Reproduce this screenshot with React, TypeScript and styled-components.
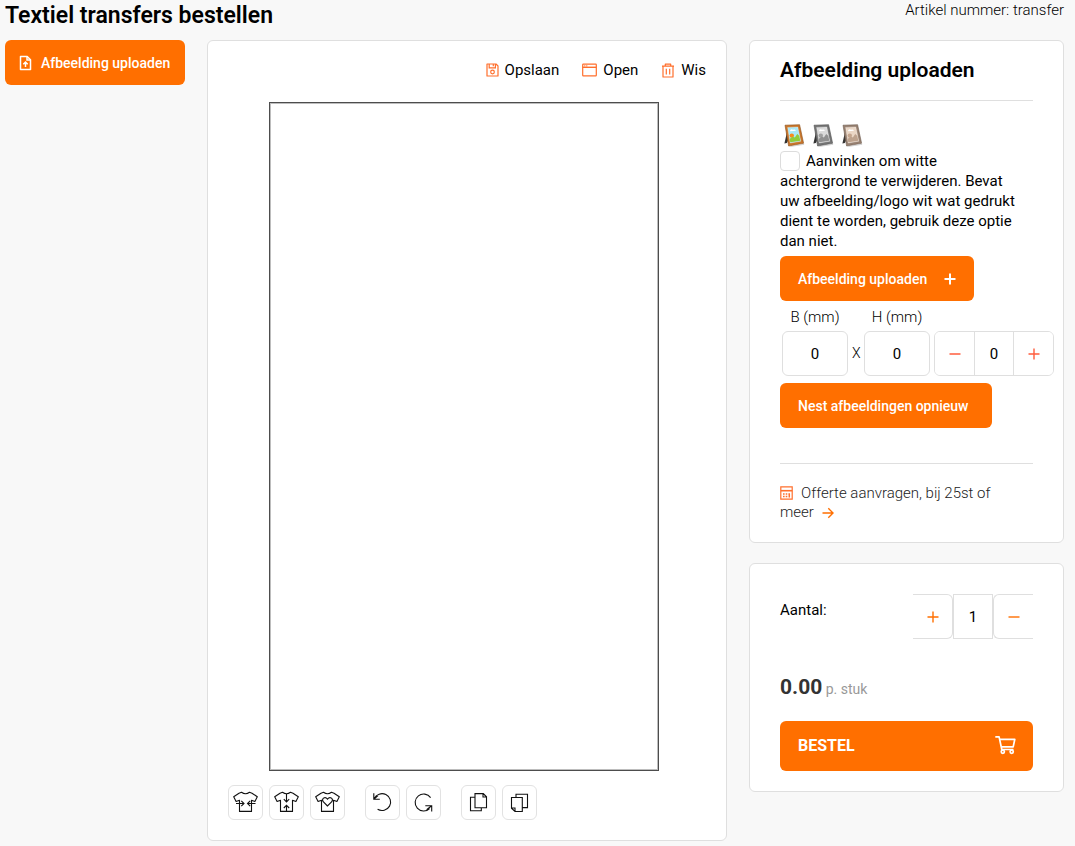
import React from 'react';
import styled, { createGlobalStyle, css } from 'styled-components';

const GlobalStyle = createGlobalStyle`
  *, *::before, *::after { box-sizing: border-box; }
  body {
    margin: 0;
    background: #f8f8f8;
    color: #000;
    font-family: Roboto, "Liberation Sans", sans-serif;
    font-size: 15px;
    line-height: 20px;
  }
  button, input { font: inherit; color: inherit; }
  svg { display: block; flex: none; }
`;

const Page = styled.div`
  padding: 0 11px 5px 5px;
`;

const Header = styled.header`
  display: flex;
  justify-content: space-between;
  align-items: flex-start;
  height: 40px;
`;

const PageTitle = styled.h1`
  margin: 0;
  font-size: 23px;
  line-height: 31px;
  font-weight: 600;
`;

const ArticleNumber = styled.span`
  font-weight: 300;
`;

const Columns = styled.main`
  display: grid;
  grid-template-columns: 180px minmax(0, 1fr) 315px;
  gap: 22px;
  align-items: start;
`;

const Card = styled.section`
  background: #fff;
  border: 1px solid #dfdfdf;
  border-radius: 6px;
`;

const Sidebar = styled.aside`
  display: flex;
  flex-direction: column;
  gap: 20px;
`;

const OrangeButton = styled.button<{ $compact?: boolean }>`
  display: inline-flex;
  align-items: center;
  gap: ${p => (p.$compact ? 9 : 17)}px;
  height: 45px;
  padding: 0 ${p => (p.$compact ? 11 : 18)}px;
  ${p => p.$compact && css`padding-left: 14px; width: 100%;`}
  border: 0;
  border-radius: 6px;
  background: #ff6f00;
  color: #fff;
  font-size: 14px;
  font-weight: 500;
  white-space: nowrap;
  cursor: pointer;
`;

const NestButton = styled(OrangeButton)`
  min-width: 212px;
`;

const Editor = styled(Card)`
  padding: 19px 20px 20px;
`;

const FileActions = styled.div`
  display: flex;
  justify-content: flex-end;
  gap: 23px;
`;

const FileAction = styled.button`
  display: flex;
  align-items: center;
  gap: 6px;
  padding: 0;
  border: 0;
  background: none;
  cursor: pointer;
`;

const CanvasArea = styled.div`
  display: flex;
  justify-content: center;
  margin: 22px 0 14px;
  padding-right: 6px;
`;

const PrintSheet = styled.div`
  width: 390px;
  height: 669px;
  background: #fff;
  border: 1px solid #4d4d4d;
  box-shadow: inset 0 0 0 1px #bdbdbd;
`;

const ToolRow = styled.div`
  display: flex;
  gap: 20px;
`;

const ToolGroup = styled.div`
  display: flex;
  gap: 6px;
`;

const ToolButton = styled.button`
  display: grid;
  place-items: center;
  width: 35px;
  height: 35px;
  padding: 0;
  border: 1px solid #e2e2e2;
  border-radius: 6px;
  background: #fff;
  cursor: pointer;
`;

const UploadCard = styled(Card)`
  padding: 14px 30px 20px;
`;

const CardTitle = styled.h2`
  margin: 0;
  padding-bottom: 15px;
  border-bottom: 1px solid #dfdfdf;
  font-size: 21px;
  line-height: 30px;
  font-weight: 600;
`;

const Filters = styled.div`
  display: flex;
  gap: 7px;
  padding: 23px 0 4px 3px;
`;

const FilterButton = styled.button`
  padding: 0;
  border: 0;
  background: none;
  cursor: pointer;
`;

const CheckLabel = styled.label`
  display: block;
  margin-bottom: 5px;
`;

const Checkbox = styled.input`
  appearance: none;
  width: 20px;
  height: 20px;
  margin: 0 6px 0 0;
  border: 1px solid #dcdcdc;
  border-radius: 4px;
  background: #fff;
  vertical-align: top;
`;

const SizeRow = styled.div`
  display: flex;
  align-items: flex-end;
  gap: 4px;
  margin: 6px 0 7px;
  padding-left: 2px;
`;

const SizeField = styled.label`
  flex: none;
  width: 66px;
  text-align: center;
  font-weight: 300;
`;

const Times = styled.span`
  flex: none;
  width: 8px;
  font-size: 14px;
  line-height: 45px;
  font-weight: 300;
  text-align: center;
`;

const SizeInput = styled.input`
  display: block;
  width: 100%;
  height: 45px;
  margin-top: 4px;
  padding: 0;
  border: 1px solid #dfdfdf;
  border-radius: 6px;
  background: #fff;
  text-align: center;
  font-weight: 400;
`;

const Stepper = styled.div`
  display: flex;
  flex: none;
  width: 120px;
  height: 45px;
  border: 1px solid #dfdfdf;
  border-radius: 6px;
  overflow: hidden;
`;

const StepButton = styled.button`
  display: grid;
  place-items: center;
  flex: 1 1 0;
  padding: 0;
  border: 0;
  background: #fff;
  color: #ff5c3d;
  cursor: pointer;
`;

const StepInput = styled.input`
  flex: none;
  width: 40px;
  padding: 0;
  border: solid #dfdfdf;
  border-width: 0 1px;
  background: #fff;
  text-align: center;
`;

const QuoteBlock = styled.div`
  margin-top: 35px;
  padding-top: 20px;
  border-top: 1px solid #dfdfdf;
  line-height: 19px;
`;

const QuoteLink = styled.a`
  color: #222;
  font-weight: 300;
  text-decoration: none;
  svg { display: inline-block; vertical-align: -2px; }
`;

const LeadIcon = styled.span`
  margin-right: 8px;
`;

const LastWord = styled.span`
  white-space: nowrap;
  svg { margin-left: 8px; }
`;

const OrderCard = styled(Card)`
  padding: 30px 30px 20px;
`;

const AmountRow = styled.div`
  display: flex;
  justify-content: space-between;
  align-items: flex-start;
`;

const AmountLabel = styled.label`
  padding-top: 6px;
`;

const AmountStepper = styled.div`
  display: flex;
  height: 45px;
`;

const AmountButton = styled.button<{ $side: 'left' | 'right' }>`
  display: grid;
  place-items: center;
  width: 40px;
  padding: 0;
  border: 1px solid #dfdfdf;
  ${p => p.$side === 'left'
    ? css`border-left: 0; border-radius: 0 6px 6px 0;`
    : css`border-right: 0; border-radius: 6px 0 0 6px;`}
  background: #fff;
  color: #ff6f00;
  cursor: pointer;
`;

const AmountInput = styled.input`
  width: 40px;
  padding: 0;
  border: 1px solid #dfdfdf;
  background: #fff;
  text-align: center;
`;

const Price = styled.p`
  margin: 33px 0 17px;
  line-height: 30px;
  font-size: 14px;
  color: #999;
`;

const PriceValue = styled.strong`
  font-size: 21px;
  font-weight: 700;
  color: #333;
`;

const OrderButton = styled(OrangeButton)`
  justify-content: space-between;
  width: 100%;
  height: 50px;
  padding-right: 17px;
  font-size: 16px;
  font-weight: 700;
`;

const UploadIcon = () => (
  <svg width="13" height="16" viewBox="0 0 13 16" fill="none" stroke="#fff" strokeWidth="1.5">
    <path d="M1.5 1.5h6.7l3.3 3.3v9.7h-10z" strokeLinejoin="round" />
    <path d="M8 1.5v3.5h3.5M6.5 12V7.5M4.3 9.3l2.2-2.2 2.2 2.2" />
  </svg>
);

const SaveIcon = () => (
  <svg width="13" height="14" viewBox="0 0 13 14" fill="none" stroke="#ff6f2c" strokeWidth="1.2">
    <path d="M1 1h9l2 2v10H1z" strokeLinejoin="round" />
    <path d="M3.2 1v3.8h6.2V1M7.3 1v2.2" />
    <circle cx="6.5" cy="9" r="1.8" />
  </svg>
);

const WindowIcon = () => (
  <svg width="15" height="14" viewBox="0 0 15 14" fill="none" stroke="#ff6f2c" strokeWidth="1.2">
    <rect x=".7" y="1.2" width="13.6" height="11.6" rx=".6" />
    <path d="M.7 4.3h13.6" strokeWidth="1.4" />
    <path d="M2.3 2.8h1M4.3 2.8h1" />
  </svg>
);

const TrashIcon = () => (
  <svg width="14" height="15" viewBox="0 0 14 15" fill="none" stroke="#ff6f2c" strokeWidth="1.2">
    <path d="M1 3.2h12M4.3 3V1.2h5.4V3M2 3.2V14h10V3.2M5.3 5.8v5.8M8.7 5.8v5.8" strokeLinejoin="round" />
  </svg>
);

const CalculatorIcon = () => (
  <svg width="13" height="14" viewBox="0 0 13 14" fill="none" stroke="#ff6f2c" strokeWidth="1.2">
    <path d="M.8.8h11.4v12.4H.8z" />
    <path d="M.8 4.7h11.4" strokeWidth="1.6" />
    <path d="M3 8h1.6M5.7 8h1.6M8.4 8H10M3 10.6h1.6M5.7 10.6h1.6M9.3 8v3.4" strokeWidth="1.5" />
  </svg>
);

const ArrowIcon = () => (
  <svg width="12" height="12" viewBox="0 0 12 12" fill="none" stroke="#ff6f00" strokeWidth="1.4">
    <path d="M.5 6h10.3M6.3 1.3 11 6l-4.7 4.7" />
  </svg>
);

const PlusIcon = ({ weight = 1.4 }: { weight?: number }) => (
  <svg width="12" height="12" viewBox="0 0 12 12" stroke="currentColor" strokeWidth={weight}>
    <path d="M.5 6h11M6 .5v11" />
  </svg>
);

const MinusIcon = () => (
  <svg width="12" height="12" viewBox="0 0 12 12" stroke="currentColor" strokeWidth="1.4">
    <path d="M.5 6h11" />
  </svg>
);

const CartIcon = () => (
  <svg width="21" height="22" viewBox="0 0 21 22" fill="none" stroke="#fff" strokeWidth="1.7" strokeLinejoin="round">
    <path d="M.3 1.9h3.8l2.7 12.6h11.6M4.8 4.3h15l-1.6 7.6H6.4" />
    <circle cx="7.8" cy="16.8" r="1.6" />
    <circle cx="16.7" cy="16.8" r="1.6" />
  </svg>
);

type FrameColors = { edge: string; dark: string; sky: string; hill: string; sun: string };

const FrameIcon = ({ edge, dark, sky, hill, sun }: FrameColors) => (
  <svg width="22" height="23" viewBox="0 0 22 23">
    <path d="M4 8 1.4 19.5l2.4-.4 1.6-3z" fill="#333" />
    <path d="M6 22.4 20.8 20l.6.8-13 2z" fill="#000" opacity=".2" />
    <path d="M2 1.2 16.6.7l4 18.6L5.6 22z" fill={edge} stroke={dark} strokeWidth=".6" />
    <path d="M4.6 3.4 14.8 3l3 14.2L7.2 19z" fill={sky} stroke="#fff" strokeOpacity=".6" strokeWidth=".5" />
    <path d="M7 6.4q1.5-2 3-.6 2-1 3 .9l-5.7.5z" fill="#fff" />
    <circle cx="8.8" cy="11.6" r="2.2" fill={sun} />
    <path d="m6.6 15 3.2-2.4 2.1.8 2.3-3.4 2 1.8 1.1 5-10 1.5z" fill={hill} />
  </svg>
);

const ToolSvg = ({ children }: { children: React.ReactNode }) => (
  <svg width="27" height="25" viewBox="0 0 27 25" fill="none" stroke="#111" strokeWidth="1.1">
    {children}
  </svg>
);

const Shirt = () => (
  <path d="M9.5 2.3 7 3.2 1.7 6.7l2.4 4.7 3.4-1.2v11.2h12V10.2l3.4 1.2 2.4-4.7L20 3.2l-2.5-.9q-4 2.8-8 0z" strokeLinejoin="round" />
);

const colourFrame: FrameColors = { edge: '#c8752a', dark: '#8a4f1b', sky: '#a9e8f7', hill: '#93cc3a', sun: '#f98a1c' };
const greyFrame: FrameColors = { edge: '#747474', dark: '#505050', sky: '#dadada', hill: '#909090', sun: '#a0a0a0' };
const sepiaFrame: FrameColors = { edge: '#978070', dark: '#6f5d51', sky: '#ead6c5', hill: '#bda28d', sun: '#c4a58e' };

export default function App() {
  return (
    <>
      <GlobalStyle />
      <Page>
        <Header>
          <PageTitle>Textiel transfers bestellen</PageTitle>
          <ArticleNumber>Artikel nummer: transfer</ArticleNumber>
        </Header>
        <Columns>
          <OrangeButton type="button" $compact><UploadIcon />Afbeelding uploaden</OrangeButton>

          <Editor>
            <FileActions>
              <FileAction type="button"><SaveIcon />Opslaan</FileAction>
              <FileAction type="button"><WindowIcon />Open</FileAction>
              <FileAction type="button"><TrashIcon />Wis</FileAction>
            </FileActions>
            <CanvasArea><PrintSheet /></CanvasArea>
            <ToolRow>
              <ToolGroup>
                <ToolButton type="button" aria-label="Horizontaal centreren">
                  <ToolSvg><Shirt /><path d="M4 13.5h8M9.3 10.8l2.7 2.7-2.7 2.7M23.5 13.5h-8M18.2 10.8l-2.7 2.7 2.7 2.7" /></ToolSvg>
                </ToolButton>
                <ToolButton type="button" aria-label="Verticaal centreren">
                  <ToolSvg><Shirt /><path d="M13.5 4v8M10.8 9.2l2.7 2.7 2.7-2.7M13.5 22v-7M10.8 18l2.7-2.7 2.7 2.7" /></ToolSvg>
                </ToolButton>
                <ToolButton type="button" aria-label="Passend maken">
                  <ToolSvg><Shirt /><path d="M13.5 16 9.2 11.7q-1.5-2.2.3-3.6 2.2-1.4 4 1 1.8-2.4 4-1 1.8 1.4.3 3.6z" /></ToolSvg>
                </ToolButton>
              </ToolGroup>
              <ToolGroup>
                <ToolButton type="button" aria-label="Ongedaan maken">
                  <ToolSvg><path d="M5.2 8.6A8.6 8.4 0 1 1 8.6 19.3M4.8 3.2v6h6M5 9l4-3.4" /></ToolSvg>
                </ToolButton>
                <ToolButton type="button" aria-label="Opnieuw">
                  <ToolSvg><path d="M20.6 7.6A8.5 8.5 0 1 0 19.6 18.6M15.3 15.7h6.4v5.8M21.6 15.8l-5 4" /></ToolSvg>
                </ToolButton>
              </ToolGroup>
              <ToolGroup>
                <ToolButton type="button" aria-label="Naar voren">
                  <ToolSvg><path d="M10 3.6h8.3l3.2 3.2v11H10zM18 3.6V7h3.5M10 7.2H5.5v13.6h10.8v-3" /></ToolSvg>
                </ToolButton>
                <ToolButton type="button" aria-label="Naar achteren">
                  <ToolSvg><path d="M5.5 7.5h10.8v14H9l-3.5-3.3zM5.5 18H9v3.5M10 7.5V4.3h11.5v13.3h-5.2" /></ToolSvg>
                </ToolButton>
              </ToolGroup>
            </ToolRow>
          </Editor>

          <Sidebar>
            <UploadCard>
              <CardTitle>Afbeelding uploaden</CardTitle>
              <Filters>
                <FilterButton type="button" aria-label="Kleur"><FrameIcon {...colourFrame} /></FilterButton>
                <FilterButton type="button" aria-label="Grijs"><FrameIcon {...greyFrame} /></FilterButton>
                <FilterButton type="button" aria-label="Sepia"><FrameIcon {...sepiaFrame} /></FilterButton>
              </Filters>
              <CheckLabel>
                <Checkbox type="checkbox" />Aanvinken om witte<br />
                achtergrond te verwijderen. Bevat<br />
                uw afbeelding/logo wit wat gedrukt<br />
                dient te worden, gebruik deze optie<br />
                dan niet.
              </CheckLabel>
              <OrangeButton type="button">Afbeelding uploaden<PlusIcon weight={2} /></OrangeButton>
              <SizeRow>
                <SizeField>B (mm)<SizeInput type="text" defaultValue="0" /></SizeField>
                <Times>X</Times>
                <SizeField>H (mm)<SizeInput type="text" defaultValue="0" /></SizeField>
                <Stepper>
                  <StepButton type="button" aria-label="Minder"><MinusIcon /></StepButton>
                  <StepInput type="text" defaultValue="0" aria-label="Aantal afbeeldingen" />
                  <StepButton type="button" aria-label="Meer"><PlusIcon /></StepButton>
                </Stepper>
              </SizeRow>
              <NestButton type="button">Nest afbeeldingen opnieuw</NestButton>
              <QuoteBlock>
                <QuoteLink href="#offerte">
                  <LeadIcon><CalculatorIcon /></LeadIcon>Offerte aanvragen, bij 25st of{' '}
                  <LastWord>meer<ArrowIcon /></LastWord>
                </QuoteLink>
              </QuoteBlock>
            </UploadCard>

            <OrderCard>
              <AmountRow>
                <AmountLabel htmlFor="amount">Aantal:</AmountLabel>
                <AmountStepper>
                  <AmountButton type="button" $side="left" aria-label="Meer"><PlusIcon /></AmountButton>
                  <AmountInput id="amount" type="text" defaultValue="1" />
                  <AmountButton type="button" $side="right" aria-label="Minder"><MinusIcon /></AmountButton>
                </AmountStepper>
              </AmountRow>
              <Price><PriceValue>0.00</PriceValue> p. stuk</Price>
              <OrderButton type="button">BESTEL<CartIcon /></OrderButton>
            </OrderCard>
          </Sidebar>
        </Columns>
      </Page>
    </>
  );
}
